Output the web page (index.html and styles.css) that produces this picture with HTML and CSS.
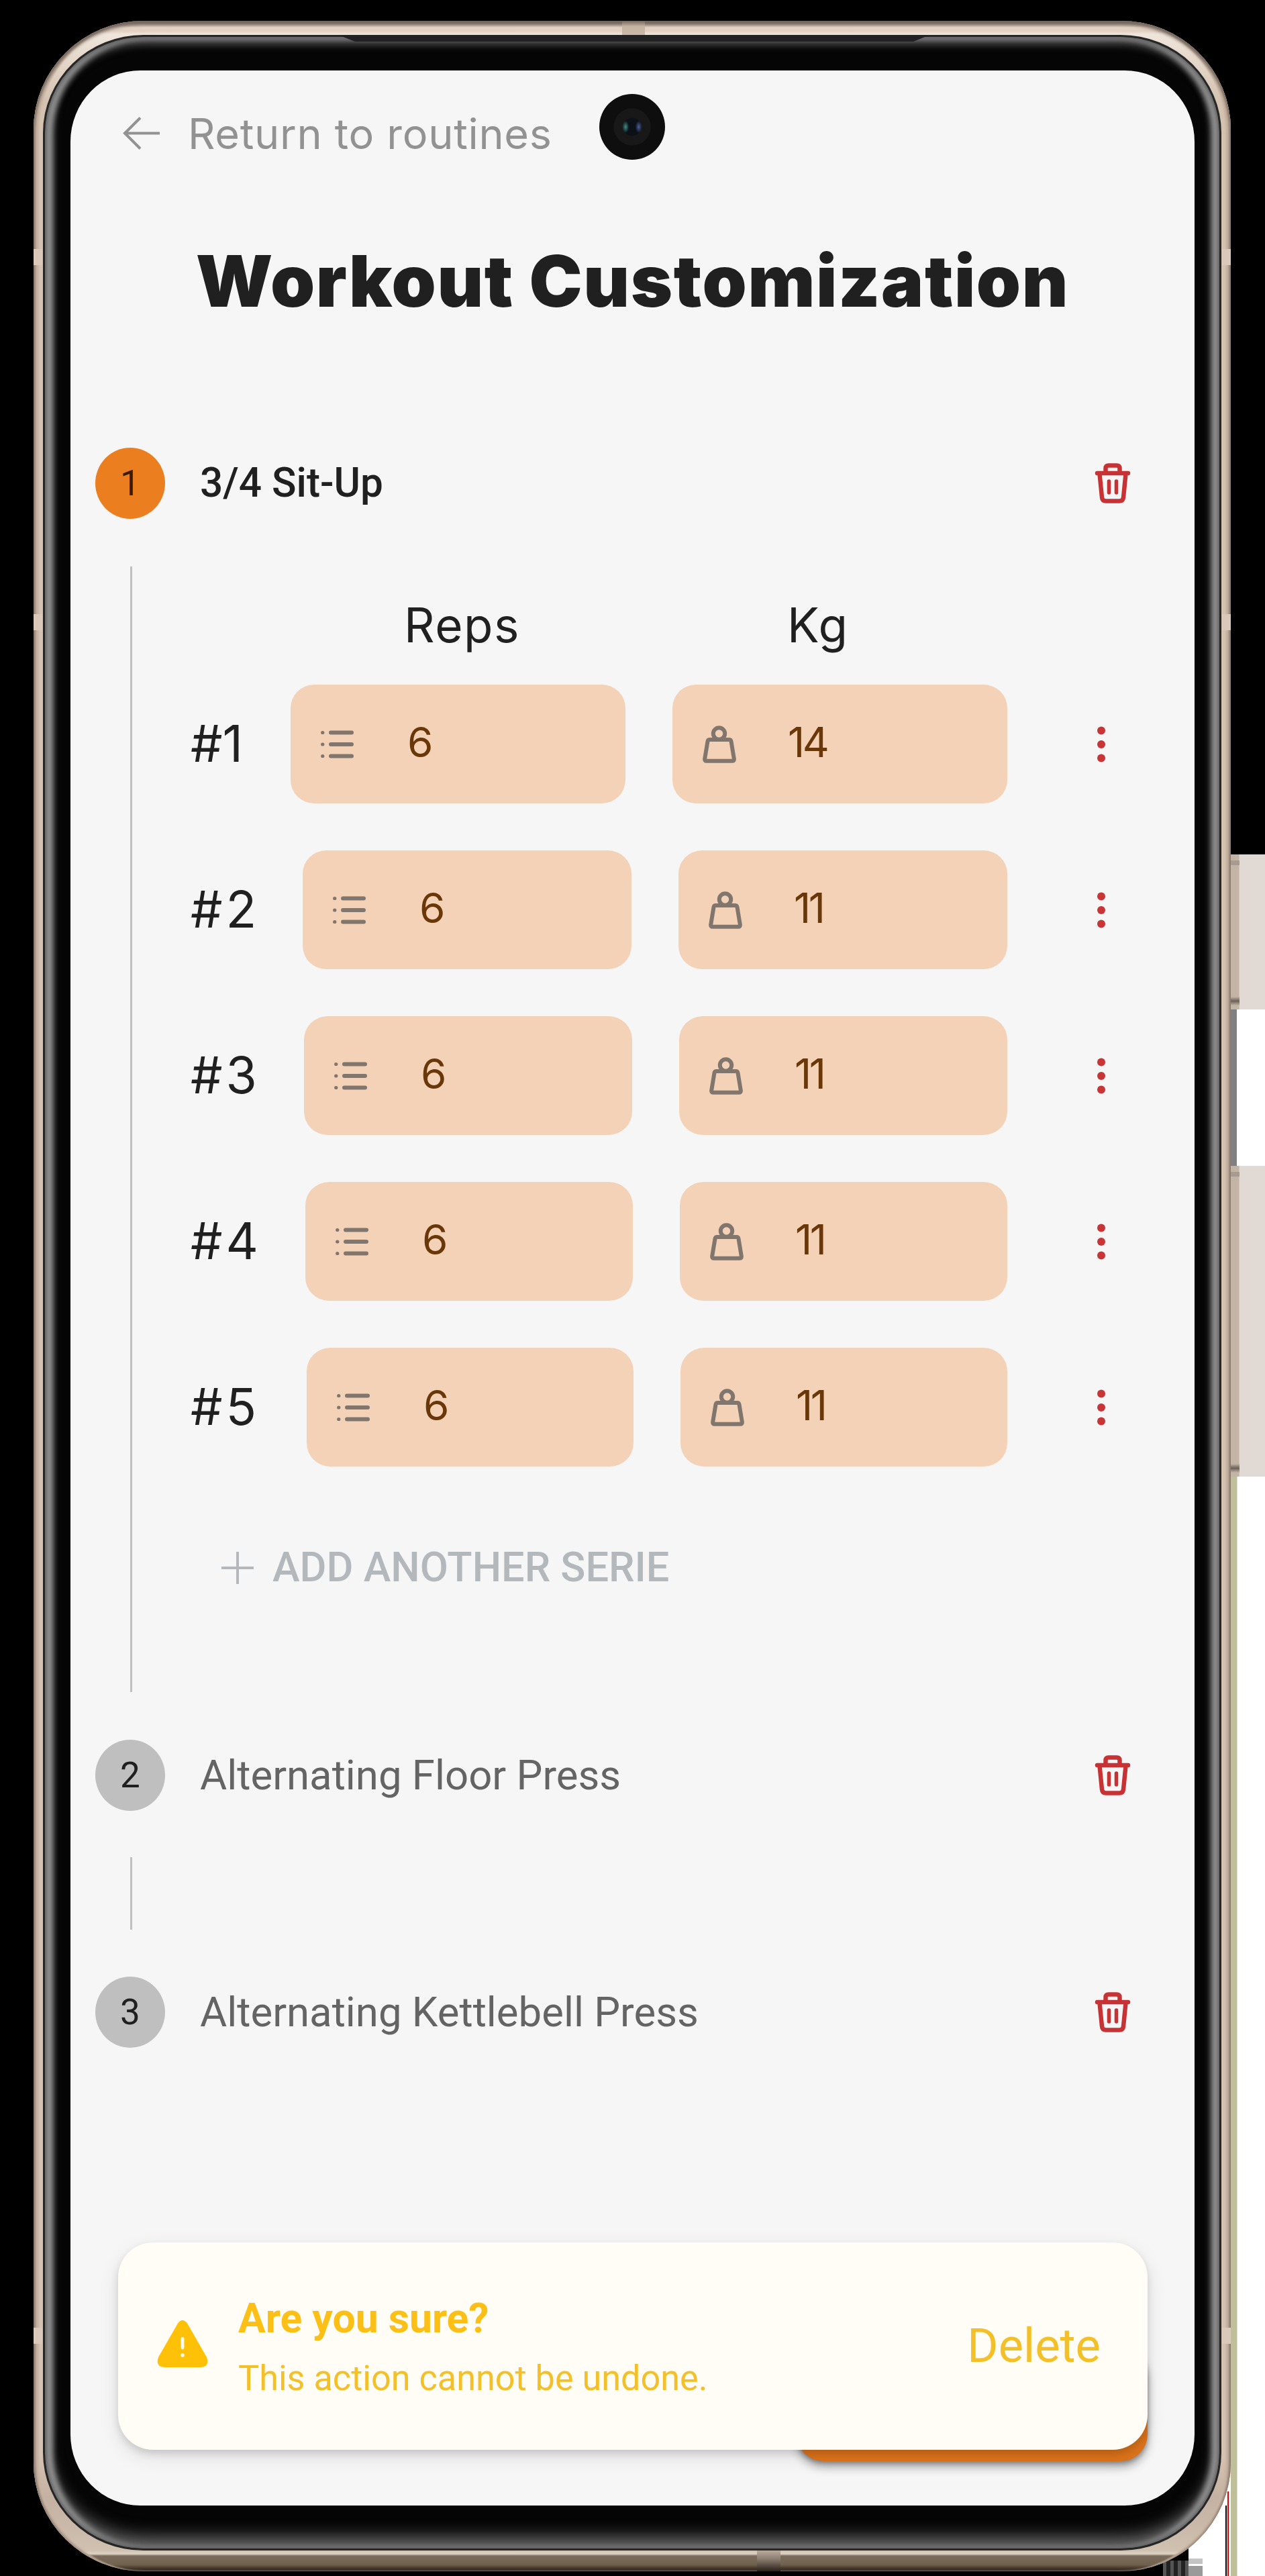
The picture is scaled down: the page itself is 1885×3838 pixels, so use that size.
FILE: index.html
```html
<!DOCTYPE html>
<html lang="en">
<head>
<meta charset="utf-8">
<title>Workout Customization</title>
<link rel="stylesheet" href="styles.css">
</head>
<body>
<svg width="0" height="0" class="sprite">
  <symbol id="trash" viewBox="0 0 60 64">
    <g fill="none" stroke="currentColor" stroke-width="6.5" stroke-linecap="round" stroke-linejoin="round">
      <path d="M7 17H53M19.500 16V10Q19.500 5.500 24 5.500H36Q40.500 5.500 40.500 10V16M10.500 18L14 53Q14.500 58.500 20 58.500H40Q45.500 58.500 46 53L49.500 18"/>
      <path d="M24.500 29V46M35.500 29V46" stroke-width="5.500"/>
    </g>
  </symbol>
  <symbol id="list" viewBox="0 0 49 42">
    <g fill="none" stroke="currentColor" stroke-width="6" stroke-linecap="round">
      <path d="M15 3.500H46M15 21H46M15 38.500H46"/>
      <path d="M2.700 3.500h.1M2.700 21h.1M2.700 38.500h.1" stroke-width="5.200"/>
    </g>
  </symbol>
  <symbol id="weight" viewBox="0 0 50 56">
    <g fill="none" stroke="currentColor" stroke-width="6" stroke-linejoin="round">
      <circle cx="24.500" cy="12" r="8.700"/>
      <path d="M10.500 21H39.500Q42 21 42.500 23.500L46.800 49.500Q47.300 52.800 44 52.800H6Q2.700 52.800 3.200 49.500L7.500 23.500Q8 21 10.500 21Z"/>
    </g>
  </symbol>
  <symbol id="dots" viewBox="0 0 14 54">
    <g fill="currentColor"><circle cx="7" cy="6.500" r="6"/><circle cx="7" cy="27" r="6"/><circle cx="7" cy="47.500" r="6"/></g>
  </symbol>
</svg>
<div class="stage">
  <div class="phone">
    <i class="band band-top"></i><i class="band band-bottom"></i>
    <i class="band band-side l a"></i><i class="band band-side l b"></i><i class="band band-side l c"></i>
    <i class="band band-side r a"></i><i class="band band-side r b"></i><i class="band band-side r c"></i>
    <div class="bezel">
      <i class="earpiece"></i>
      <main class="screen">
        <a class="back">
          <svg width="56" height="50" viewBox="0 0 56 50" fill="none" stroke="currentColor" stroke-width="4"><path d="M2 24.500H55M26 1.500L3 24.500L26 47.500"/></svg>
          <span>Return to routines</span>
        </a>
        <span class="camera"></span>
        <h1 class="title">Workout Customization</h1>

        <section class="steps">
          <header class="step active"><span class="num">1</span><h2>3/4 Sit-Up</h2><svg class="trash"><use href="#trash"/></svg></header>
          <div class="sets">
            <div class="heads"><span>Reps</span><span>Kg</span></div>
            <div class="set s1"><span class="label">#1</span><div class="field"><svg class="list"><use href="#list"/></svg><b>6</b></div><div class="field"><svg class="weight"><use href="#weight"/></svg><b>14</b></div><svg class="dots"><use href="#dots"/></svg></div>
            <div class="set s2"><span class="label">#2</span><div class="field"><svg class="list"><use href="#list"/></svg><b>6</b></div><div class="field"><svg class="weight"><use href="#weight"/></svg><b>11</b></div><svg class="dots"><use href="#dots"/></svg></div>
            <div class="set s3"><span class="label">#3</span><div class="field"><svg class="list"><use href="#list"/></svg><b>6</b></div><div class="field"><svg class="weight"><use href="#weight"/></svg><b>11</b></div><svg class="dots"><use href="#dots"/></svg></div>
            <div class="set s4"><span class="label">#4</span><div class="field"><svg class="list"><use href="#list"/></svg><b>6</b></div><div class="field"><svg class="weight"><use href="#weight"/></svg><b>11</b></div><svg class="dots"><use href="#dots"/></svg></div>
            <div class="set s5"><span class="label">#5</span><div class="field"><svg class="list"><use href="#list"/></svg><b>6</b></div><div class="field"><svg class="weight"><use href="#weight"/></svg><b>11</b></div><svg class="dots"><use href="#dots"/></svg></div>
            <div class="add"><svg width="48" height="48" viewBox="0 0 48 48" stroke="currentColor" stroke-width="4"><path d="M24 0V48M0 24H48"/></svg><span>ADD ANOTHER SERIE</span></div>
          </div>
          <header class="step"><span class="num">2</span><h2>Alternating Floor Press</h2><svg class="trash"><use href="#trash"/></svg></header>
          <div class="connector"></div>
          <header class="step"><span class="num">3</span><h2>Alternating Kettlebell Press</h2><svg class="trash"><use href="#trash"/></svg></header>
        </section>

        <span class="save"></span>
        <div class="snackbar">
          <svg class="warn" viewBox="0 0 76 70"><path d="M31 4.500Q38-4.500 45 4.500L74 55Q79 69 65 70H11Q-3 69 2 55Z" fill="#ffc107"/><path d="M38 27.500V41" stroke="#fffdf6" stroke-width="4.800" stroke-linecap="round"/><circle cx="38" cy="52" r="2.700" fill="#fffdf6"/></svg>
          <div class="message"><strong>Are you sure?</strong><span>This action cannot be undone.</span></div>
          <span class="delete">Delete</span>
        </div>
      </main>
    </div>
  </div>
  <div class="edge">
    <i class="void"></i><i class="key power"></i><i class="gap"></i><i class="key volume"></i><i class="tail"></i>
  </div>
</div>
</body>
</html>
```
FILE: styles.css
```css
* { box-sizing: border-box; margin: 0; padding: 0; }
body { width: 1885px; height: 3838px; overflow: hidden; background: #000; font-family: Roboto, sans-serif; }
.sprite { position: absolute; }
svg { display: block; flex: none; }
i { display: block; }

.stage {
  display: flex; height: 3838px; padding-left: 50px;
  background:
    linear-gradient(#e00000, #e00000) 1829px 3712px / 2px 126px no-repeat,
    linear-gradient(#000, #000) 1826px 3733px / 2px 105px no-repeat,
    linear-gradient(#9a9a9a, #9a9a9a) 1771px 3823px / 21px 15px no-repeat,
    linear-gradient(#c4c4c4, #c4c4c4) 1771px 3812px / 21px 8px no-repeat,
    linear-gradient(#fff, #fff) 1771px 3660px / 63px 178px no-repeat,
    repeating-linear-gradient(90deg, #555 0 5px, #222 5px 11px) 1733px 3815px / 38px 23px no-repeat,
    #000;
}

/* device body */
.phone {
  position: relative; width: 1784px; height: 3800px; margin-top: 31px; padding: 21px 14px 31px;
  border-radius: 164px / 162px;
  background: linear-gradient(#63564f 0, #a8988d 5px, #e3d3c5 10px, #e2d0c2 15px, #efe5da 20px, #d5c2b1 120px, #d5c2b1 3630px, #c4b1a2 3690px, #cfc0b0 3769px, #e0d4c6 3774px, #7c6c5c 3777px, #71614f 3790px, #1e150e 3800px);
  box-shadow: inset 0 5px 5px #75675e, inset 3px 0 3px #9d8b7d, inset -3px 0 3px #9d8b7d, inset 10px 0 2px -2px #c9b5a4, inset -10px 0 2px -2px #c9b5a4;
}
.band { position: absolute; background: #dac8ba; }
.band-top { left: 877px; top: 0; width: 34px; height: 21px; background: linear-gradient(#75665c, #c5b3a2 40%, #cbbaa8); }
.band-bottom { left: 1078px; bottom: 0; width: 35px; height: 31px; background: linear-gradient(#b9aa9c, #8d7f72 40%, #2a2018); }
.band-side { width: 13px; height: 24px; }
.l { left: 0; }
.r { right: 0; }
.a { top: 340px; }
.b { top: 884px; }
.c { top: 3437px; }

.bezel {
  position: relative; height: 3748px; padding: 50px 38px 64px;
  border: 3px solid #262626; border-radius: 150px / 146px; background: #050505;
  box-shadow: inset 0 0 6px 2px #555, inset 12px 0 9px #969696, inset -12px 0 9px #969696, inset 0 9px 14px #6f6f6f, inset 0 -17px 24px #6b6b6b;
}
.earpiece { position: absolute; left: 440px; top: -2px; width: 876px; height: 9px; background: #212121; clip-path: polygon(0 0, 100% 0, calc(100% - 22px) 100%, 22px 100%); }
.screen { position: relative; width: 1675px; height: 3628px; padding: 44px 0 0; border-radius: 104px / 106px; background: #f6f6f6; overflow: hidden; }

.back { display: flex; align-items: center; gap: 41px; height: 100px; padding-left: 78px; color: #929292; font: 400 63px/1 Inter, sans-serif; letter-spacing: .7px; }
.camera {
  position: absolute; left: 788px; top: 35px; width: 98px; height: 98px; border-radius: 50%;
  background:
    radial-gradient(ellipse 5px 9px at 40% 50%, #3f8f87, transparent),
    radial-gradient(ellipse 5px 9px at 60% 50%, #4e5ea0, transparent),
    radial-gradient(circle at 50% 50%, #0c1118 0 13px, #181818 14px 27px, #0e0e0e 28px);
}
.title { display: flex; align-items: center; justify-content: center; height: 140px; margin-top: 100px; color: #202020; font: 900 106px/1 Inter, sans-serif; letter-spacing: 1.600px; white-space: nowrap; }

/* stepper */
.steps { margin-top: 178px; }
.step { display: flex; align-items: center; height: 106px; padding: 0 92px 0 37px; color: #646464; }
.num { display: flex; align-items: center; justify-content: center; width: 104px; height: 106px; margin-right: 52px; border-radius: 50%; background: #bfbfbf; color: #202020; font-size: 53px; }
.step h2 { flex: 1; padding-top: 1px; font-size: 61.700px; font-weight: 400; line-height: 1; white-space: nowrap; }
.active { color: #202020; }
.active .num { background: #eb7f20; color: #3a1c00; }
.active h2 { font-size: 60.300px; font-weight: 500; }
.trash { width: 60px; height: 64px; color: #c73334; }
.connector { height: 108px; margin: 69px 0 70px 89px; border-left: 3px solid #c0c0c0; }

.sets { height: 1677px; margin: 71px 0 71px 89px; padding-left: 87px; border-left: 3px solid #c0c0c0; font-family: Inter, sans-serif; color: #202020; }
.heads { display: flex; align-items: center; height: 176px; padding: 0 0 3px 318px; font-size: 71px; letter-spacing: 1.500px; }
.heads span:first-child { width: 571px; }
.set { display: flex; align-items: center; gap: 70px; height: 177px; margin-bottom: 70px; }
.label { padding-bottom: 2px; font-size: 75px; line-height: 1; letter-spacing: 5px; white-space: nowrap; }
.s1 .label { width: 79px; letter-spacing: 0; }
.s2 .label { width: 97px; }
.s3 .label { width: 99px; }
.s4 .label { width: 101px; }
.s5 .label { width: 103px; }
.field { display: flex; flex: 1; align-items: center; height: 177px; padding-left: 45px; border-radius: 35px; background: #f4d2b7; }
.field b { padding-bottom: 5px; color: #693708; font-size: 62px; font-weight: 400; line-height: 1; letter-spacing: -3.500px; }
.list { width: 49px; height: 42px; margin-right: 80px; color: #81766d; }
.weight { width: 50px; height: 56px; margin-right: 77px; color: #81766d; }
.dots { width: 14px; height: 54px; margin: 0 132px 0 63px; color: #c73537; }
.add { display: flex; align-items: center; gap: 28px; height: 62px; margin-top: 120px; padding-left: 46px; color: #b2b8bc; font: 500 61.200px/1 Roboto, sans-serif; }

/* confirmation */
.save { position: absolute; left: 1082px; bottom: 66px; width: 523px; height: 170px; border-radius: 40px; background: #e0751b; box-shadow: 0 9px 14px rgba(0, 0, 0, .3), 0 3px 6px rgba(0, 0, 0, .25); }
.snackbar { position: absolute; left: 71px; top: 3236px; display: flex; align-items: center; width: 1534px; height: 309px; padding: 0 70px 0 58px; border-radius: 52px; background: #fffdf6; color: #f4c02a; box-shadow: 0 10px 30px rgba(0, 0, 0, .1), 0 6px 12px rgba(0, 0, 0, .12); }
.warn { width: 76px; height: 70px; margin: 0 45px 8px 0; }
.message { display: flex; flex: 1; flex-direction: column; gap: 33px; padding-top: 7px; }
.message strong { font-size: 60.700px; line-height: 56px; color: #fbbf16; }
.message span { font-size: 52.200px; line-height: 56px; }
.delete { font-size: 70.500px; line-height: 1; }

/* right-hand edge with the hardware keys */
.edge { display: flex; flex-direction: column; width: 51px; }
.void { height: 1273px; background: #000; }
.key { background: linear-gradient(90deg, #c3b4a6 12px, #e1d9d3 13px); position: relative; }
.key::before, .key::after { content: ""; position: absolute; left: 0; width: 13px; }
.key::before { top: 9px; height: 7px; background: #aa9b90; }
.key::after { bottom: 6px; height: 13px; background: linear-gradient(#c3b4a6, #6b625b, #c3b4a6); }
.power { height: 231px; }
.gap { height: 233px; background: linear-gradient(90deg, #808080 9px, #fff 9px); }
.volume { height: 463px; }
.tail { flex: 1; background: linear-gradient(90deg, #bfbf9c 9px, #fff 10px); }
```
